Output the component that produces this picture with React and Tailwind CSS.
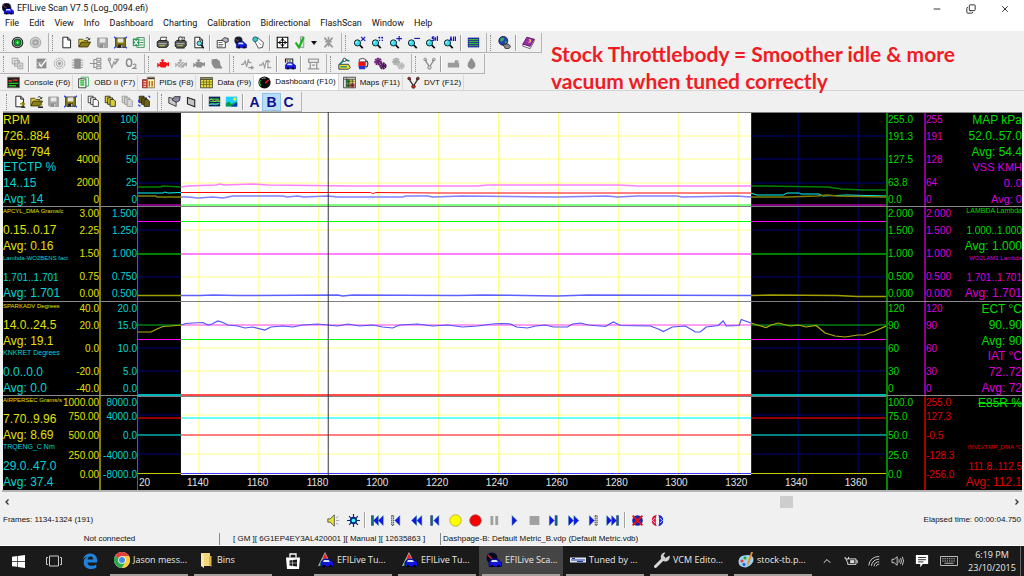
import React from "react";
import { ChevronUp, X, Minus, Copy } from "lucide-react";

const UI = "font-['Open_Sans','Noto_Sans',sans-serif]";
const ARIAL = "font-['Liberation_Sans',Arial,sans-serif]";

/* ---------- toolbar glyphs, drawn on a 16 unit grid ---------- */
const lens = (
  <>
    <path d="M8 11l4 4" stroke="#111" strokeWidth="2.2" />
    <circle cx="5.5" cy="8.5" r="3.8" fill="#35e0ee" stroke="#123" strokeWidth="1.2" />
    <path d="M3.6 8.5a2 2 0 0 1 1.6-1.9" stroke="#fff" fill="none" />
  </>
);
const car = (
  <g>
    <path d="M3 14.5V10l2.5-3h6L14 9.5l1.5 1v4z" fill="#1414e0" stroke="#00006a" strokeWidth=".8" />
    <path d="M6 8h4.5l1.5 2H5z" fill="#cfe6ff" />
    <circle cx="6" cy="14" r="1.3" fill="#000" />
    <circle cx="12.5" cy="14" r="1.3" fill="#000" />
  </g>
);
const page = <path d="M3.5 1.5h6L13 5v9.5H3.5z M9.5 1.5V5H13" fill="#fff" stroke="#222" strokeWidth="1.2" />;
const folder = (
  <>
    <path d="M1 13V4h5l1.5 1.5H12V8" fill="#d9c94a" stroke="#4a4200" />
    <path d="M1 13.5l3-6h11.5l-3.5 6z" fill="#8a7d18" stroke="#2e2a00" />
    <path d="M9.5 3c2-2 4-1 4.500 1.500m0 0l-2-.8m2 .8l1-1.800" stroke="#111" fill="none" />
  </>
);
const disk = (a, b) => (
  <>
    <path d="M2 2.500h12v11.500H3.500L2 12.500z" fill={a} stroke={b} />
    <path d="M4.500 3h7v5h-7z" fill="#e8e8e8" />
    <path d="M5 10.500h6V14H5z" fill={b} />
    <path d="M9 11.200h1.300V14H9z" fill="#eee" />
  </>
);
const printer = (
  <>
    <path d="M5 6l1-4.500h7L12 6z" fill="#fff" stroke="#222" />
    <path d="M1.500 7l2-1.500h10L15 7v5l-2 2H3l-1.500-1.500z" fill="#555" stroke="#111" />
    <path d="M3 9.500h10" stroke="#ddd" />
    <path d="M4 12h7" stroke="#e8e85a" />
  </>
);
const engine = (c) => (
  <path d="M6 3h4v1.500H9V6h3l1 1.500h1.500v-1H16v5h-1.500v-1H13L12 13H6l-1.500-2H3v1.500H1.500v-5H3V9h1.500V6H7V4.500H6z" fill={c} />
);
const gearPair = (c, d) => (
  <g fill="none">
    <circle cx="5" cy="5.500" r="3.200" stroke={c} strokeWidth="3" strokeDasharray="2.200 .5" />
    <circle cx="5" cy="5.500" r="2.200" fill={c} />
    <circle cx="11" cy="11" r="3" stroke={d} strokeWidth="3" strokeDasharray="2.200 .5" />
    <circle cx="11" cy="11" r="2" fill={d} />
  </g>
);
const multi = (c) => (
  <g stroke="#222" fill={c}>
    <path d="M1.500 1.500h6v8h-6z" />
    <path d="M4.500 3.500h6v8h-6z" />
    <path d="M7.500 5.500H12l2 2v6.500H7.500z" />
  </g>
);
const vials = (c, d) => (
  <g fill="none" stroke={c} strokeWidth="1.600">
    <path d="M2 3l4 6m8-6l-4 6M4 2v3m8-3v3M6 9l2 4 2-4" />
    <circle cx="2.500" cy="3" r="1.600" fill={d} stroke={c} strokeWidth="1" />
    <circle cx="13.500" cy="3" r="1.600" fill={d} stroke={c} strokeWidth="1" />
    <circle cx="8" cy="13" r="2.200" fill={d} stroke={c} strokeWidth="1" />
  </g>
);
const zoomMark = (d) => (
  <>
    {lens}
    <path d={d} stroke="#1a1ac0" strokeWidth="1.500" fill="none" />
  </>
);
const dkPage = (
  <>
    {page}
    <path d="M8.500 11h5m-2.500-2.500l3 2.500-3 2.500" stroke="#8a7a00" strokeWidth="1.600" fill="none" />
    <path d="M10 15h5" stroke="#111" strokeWidth="1.500" />
  </>
);
const bars = (
  <>
    <path d="M1 2h14v12H1z" fill="#10205a" />
    <path d="M2 5h12M2 8h12M2 11h12" stroke="#33c24a" strokeWidth="1.500" />
  </>
);

const ICONS = {
  link: (
    <>
      <circle cx="8" cy="8" r="6.500" fill="#bbb" stroke="#222" strokeWidth="1.300" />
      <circle cx="8" cy="8" r="4.300" fill="#0fa81a" stroke="#033" />
      <path d="M6.500 8h3M8 6.500v3" stroke="#9dff9d" />
    </>
  ),
  linkOff: (
    <>
      <circle cx="8" cy="8" r="6.500" fill="#cfcfcf" stroke="#999" />
      <circle cx="8" cy="8" r="4" fill="#a5a5a5" />
      <path d="M6.500 8h3M8 6.500v3" stroke="#ddd" />
    </>
  ),
  page,
  folder,
  disk: disk("#aaa", "#8c8c8c"),
  diskLog: (
    <>
      {disk("#8a7d10", "#222")}
      <path d="M0 1l2.500 2M16 1l-2.500 2M0 15l2.500-2M16 15l-2.500-2" stroke="#2a3cff" strokeWidth="1.600" />
    </>
  ),
  excel: (
    <>
      <path d="M6 2h9v12H6z" fill="#fff" stroke="#1c7a3c" />
      <path d="M9 5h5M9 8h5M9 11h5" stroke="#1c7a3c" />
      <path d="M1 3h8v9.500H1z" fill="#2f9a55" />
      <path d="M2.800 5l4.500 6m0-6l-4.500 6" stroke="#fff" strokeWidth="1.500" />
    </>
  ),
  printer,
  printer2: (
    <>
      {printer}
      <circle cx="8" cy="3.500" r="2.300" fill="#eee" stroke="#333" />
      <path d="M3 15h10" stroke="#333" />
    </>
  ),
  preview: (
    <>
      {page}
      <circle cx="9" cy="9" r="2.800" fill="#5fe3ee" stroke="#122" />
      <path d="M11 11l3.500 4" stroke="#111" strokeWidth="1.800" />
    </>
  ),
  props: (
    <>
      <path d="M1.500 5.500h10v9h-10z" fill="#fff" stroke="#222" />
      <path d="M3 8h5M3 10.500h6M3 12.500h5" stroke="#555" />
      <path d="M7 5l3-3 5 1v4l-3 1z" fill="#b5b5c8" stroke="#222" />
    </>
  ),
  scanCar: (
    <>
      <circle cx="5.500" cy="5.500" r="5" fill="#102030" />
      <path d="M2 4l4 3" stroke="#e33" />
      {car}
    </>
  ),
  tag: (
    <>
      <path d="M3 6l4-4 7 6-1 6-5 1z" fill="#fff" stroke="#333" />
      <circle cx="4" cy="4" r="3" fill="#39c7c7" stroke="#156" />
      <path d="M8 8l3 3" stroke="#888" />
    </>
  ),
  grid: (
    <>
      <path d="M1.500 1.500h13v13h-13z" fill="#fff" stroke="#111" strokeWidth="1.400" />
      <path d="M8 2v12M2 8h12" stroke="#111" strokeWidth="1.300" />
      <path d="M8 2.500l-2.500 3h5zM8 13.500l-2.500-3h5zM2.500 8l3-2.500v5zM13.500 8l-3-2.500v5z" fill="#111" />
    </>
  ),
  check: (
    <>
      <path d="M8 1h4v13H8z" fill="#ddd" stroke="#888" />
      <path d="M2 8l4 6L12 1.500" stroke="#12b51a" strokeWidth="2.600" fill="none" />
    </>
  ),
  checkOff: (
    <g stroke="#9a9a9a" strokeWidth="2" fill="none">
      <path d="M8 1v12M3 2l10 12M13 2L3 14M4 7h8" />
    </g>
  ),
  zx: zoomMark("M10 1l5 5m0-5l-5 5"),
  z1: zoomMark("M10.500 1v2m0 1.500v1.500M14 1v2m0 1.500V6M9 2h1M12.500 2h1"),
  zp: zoomMark("M12.500 0v6.500M9 3.300h7"),
  zm: zoomMark("M9 3h7"),
  zs: zoomMark("M9 1h2.500M9 1v2h2v2.500H8.500M13 1.500v4M15.300 0v6"),
  za: zoomMark("M8.500 6l1.300-4.500L11 6M13 .5V6M15.300 .5V6"),
  list: (
    <>
      <path d="M1 2h14v12H1z" fill="#2424a8" />
      <path d="M2 4.500h12M2 7h12M2 9.500h12M2 12h12" stroke="#37b537" strokeWidth="1.500" />
    </>
  ),
  web: (
    <>
      <circle cx="6.500" cy="6" r="5.500" fill="#2440b8" stroke="#113" />
      <path d="M3 3q3-2 5 0l-2 3-3 1zM8 7l3-1-1 4z" fill="#35b545" />
      <path d="M6 10h7l2.500 3-2 2.500H9z" fill="#888" stroke="#222" />
    </>
  ),
  book: (
    <>
      <path d="M6 1.500L15 4l-5 9-9-3z" fill="#a02ab0" stroke="#401048" />
      <path d="M1 10l9 3 5-9v2.500l-5 9-9-3z" fill="#fff" stroke="#401048" strokeWidth=".8" />
      <path d="M8.500 5q2-1 2 .7T8 8" stroke="#ffd84a" strokeWidth="1.400" fill="none" />
    </>
  ),
  copyOff: (
    <g stroke="#999" fill="#e4e4e4">
      <path d="M1.500 1.500h7v7h-7zM4.500 4.500h6v7h-6z" />
      <path d="M8.500 7.500h6v7h-6z" />
      <path d="M10 10h3M10 12h3" />
    </g>
  ),
  boxCheck: (
    <>
      <path d="M2 2h12v12H2z" fill="#8c8c8c" />
      <path d="M2 7h6M2 11h4" stroke="#ccc" />
      <path d="M5 8l2.500 3.500L14 3" stroke="#fff" strokeWidth="1.800" fill="none" />
    </>
  ),
  rings: (
    <g fill="none" stroke="#999">
      <circle cx="8" cy="8" r="6.500" strokeDasharray="3 1" />
      <circle cx="8" cy="8" r="4" />
      <circle cx="8" cy="8" r="1.500" fill="#999" />
    </g>
  ),
  chip: (
    <>
      <path d="M1 4h14M1 7h14M1 10h14M1 13h14" stroke="#aaa" strokeWidth="1.300" />
      <path d="M4 2h8v12.500H4z" fill="#8e8e8e" />
    </>
  ),
  tree: (
    <g stroke="#909090" fill="none" strokeWidth="1.300">
      <path d="M1 8h5M6 3v10h3M6 8h3M6 3h3" />
      <path d="M9.500 1.500h5v3h-5zM9.500 6.500h5v3h-5zM9.500 11.500h5v3h-5z" />
    </g>
  ),
  pins: (
    <g stroke="#999" fill="none" strokeWidth="1.500">
      <path d="M2 3l4 10 3-8M9 3h5l-4 6M14 2l-5 7" />
      <circle cx="3" cy="3" r="1.500" />
    </g>
  ),
  o2: (
    <g stroke="#8c8c8c" fill="none" strokeWidth="1.900">
      <ellipse cx="5" cy="7" rx="3.200" ry="4.500" />
      <path d="M10 9.500q3-2 3.500.5 0 1.500-3.500 4h4.500" strokeWidth="1.400" />
    </g>
  ),
  engRed: engine("#f01414"),
  engOff1: (
    <>
      {engine("#a8a8a8")}
      <path d="M3 12l10-8M6 13l8-7" stroke="#efefef" />
    </>
  ),
  engOff2: engine("#8f8f8f"),
  bell: <path d="M2 3l6-1 4 3 1 5 2 3v1H6L4 12l-2-4z" fill="#8c8c8c" />,
  waveR: <path d="M0 9h3l2-4 2 7 2-9 1 4h3M9 13h6l-2.500-2m2.500 2l-2.500 2" stroke="#999" strokeWidth="1.400" fill="none" />,
  waveU: <path d="M0 10h3l2-3 2 6 2-9M11 13V4m-2.500 2.500L11 4l2.500 2.500M10 13h5" stroke="#999" strokeWidth="1.400" fill="none" />,
  carGauge: (
    <>
      <path d="M3 7V2.500h9V7" fill="#ddd" stroke="#223" strokeWidth="1.300" />
      <path d="M4.500 4h2v2h-2z" fill="#f22" />
      <path d="M7.500 4h2v2h-2z" fill="#2b2" />
      {car}
    </>
  ),
  box: (
    <g stroke="#999" fill="none" strokeWidth="1.600">
      <path d="M2 2.500h12v4H2zM4 6.500v8h8v-8M6 10h4M1 14.500h14" />
    </g>
  ),
  pump: (
    <>
      <path d="M1 9h12l2 4-2 2H1z" fill="#e8e232" stroke="#223" />
      <path d="M2 9L8 3l6 2" stroke="#117a7a" strokeWidth="2" fill="none" />
      <circle cx="8" cy="3.500" r="2" fill="#fff" stroke="#122" />
      <path d="M3 12h8" stroke="#168a8a" strokeWidth="1.600" />
    </>
  ),
  can: (
    <>
      <path d="M4 3q4-2.500 8 0v3H4z" fill="#fff" stroke="#223" />
      <path d="M3 6h9v5H3z" fill="#e11" />
      <path d="M3 11h9l-1 4H4z" fill="#2335d5" />
      <path d="M12 5q3 0 2.500 4T12 12" stroke="#223" fill="none" strokeWidth="1.300" />
    </>
  ),
  gears: gearPair("#6a1a72", "#4c1054"),
  gearsOff: gearPair("#a8a8a8", "#b8b8b8"),
  vialsOff: vials("#8c8c8c", "#c8c8c8"),
  tank: <path d="M1 7h8l1-3h4v2h-2l3 1v6H1z" fill="#9a9a9a" />,
  drop: <path d="M8 1q6 7 4.500 10.500Q11 15 8 15t-4.500-3.500Q2 8 8 1z" fill="#8f8f8f" />,
  console: (
    <>
      <path d="M.5 1.500h15v13H.5z" fill="#1c1c1c" stroke="#777" />
      <path d="M2 5h4v2H2zM9 4h4v2H9z" fill="#e22" />
      <path d="M2 9h12M2 12h9M7 5h1.500" stroke="#1ec51e" strokeWidth="1.600" />
    </>
  ),
  obd: (
    <>
      <path d="M5 1.500h9v11H5z" fill="#fff" stroke="#2a5" />
      <path d="M2 3.500h9v11H2z" fill="#e6ffe6" stroke="#222" />
      <path d="M4 6h5M4 8.500h5M4 11h5" stroke="#19a82c" strokeWidth="1.400" />
    </>
  ),
  pids: (
    <>
      <path d="M.5 4.500h6v10h-6z" fill="#d5483b" stroke="#822" />
      <path d="M6.500 1.500h9v13h-9z" fill="#fff3b0" stroke="#764" />
      <path d="M7 3h8" stroke="#335" strokeWidth="1.800" />
      <path d="M9 6v7M12.500 6v7" stroke="#c0601a" strokeWidth="1.800" />
      <path d="M2 7h3M2 10h3M2 13h3" stroke="#fff" />
    </>
  ),
  data: (
    <>
      <path d="M.5 2h15v12.500H.5z" fill="#e8e03c" stroke="#333" />
      <path d="M.5 4h15" stroke="#555" strokeWidth="1.800" />
      <path d="M1 7.500h14M1 10.500h14M4.500 4v10M8 4v10M11.500 4v10" stroke="#6a661a" />
    </>
  ),
  gauge: (
    <>
      <circle cx="8" cy="8" r="7.500" fill="#0a0a0a" />
      <path d="M3.500 12A6 6 0 0 1 3 5" stroke="#2c4" strokeWidth="1.400" fill="none" />
      <path d="M9 9l4-4" stroke="#f22" strokeWidth="1.600" />
      <path d="M4.500 3.500a6 6 0 0 1 5-1" stroke="#ccc" fill="none" />
    </>
  ),
  maps: (
    <>
      <path d="M.5 1.500h15v13H.5z" fill="#ddd" stroke="#333" />
      <path d="M4 4h5v5H4z" fill="#1faa1f" />
      <path d="M9 4h5v5H9z" fill="#e8d82a" />
      <path d="M4 9h5v5H4z" fill="#1faa1f" />
      <path d="M9 9h5v5H9z" fill="#d22" />
      <path d="M4 2v12M1 4h14M6.500 4v10M11.500 4v10M4 6.500h10M4 11.500h10" stroke="#333" strokeWidth=".8" />
    </>
  ),
  dvt: vials("#333", "#e11414"),
  dPage: dkPage,
  dFolder: (
    <>
      {folder}
      <path d="M10 15h6" stroke="#111" strokeWidth="1.800" />
      <path d="M11 12h4" stroke="#8a7a00" strokeWidth="1.600" />
    </>
  ),
  dPages: multi("#fff"),
  dPagesY: multi("#d8cc3a"),
  dPagesG: <g opacity=".45">{multi("#bbb")}</g>,
  dPagesL: (
    <>
      {multi("#6e6410")}
      <path d="M0 12l3 2M13 1l2 2M1 6l-1 3" stroke="#2a3cff" strokeWidth="1.600" />
    </>
  ),
  panel: (
    <>
      <path d="M1 3l9 2v9l-9-4z" fill="#c9c9c9" stroke="#222" />
      <path d="M5 6l3-4h7l-1 5-4 2z" fill="#8c8ca8" stroke="#222" />
    </>
  ),
  panel2: <path d="M3 3l9 3v8.500L3 11z" fill="#c4c4c4" stroke="#222" strokeWidth="1.300" />,
  chart: (
    <>
      {bars}
      <path d="M1 7l3-2 4 3 3-2 4 2" stroke="#e8e832" fill="none" />
      <path d="M1 12l4-1 4 1 5-2" stroke="#5cf" fill="none" />
    </>
  ),
  photo: (
    <>
      <path d="M1 2h14v12H1z" fill="#1bd0ff" />
      <path d="M1 14V10l4-2 3 3 7-3v6z" fill="#0a9a4a" />
      <path d="M7 14l8-5v5z" fill="#1434c8" />
      <circle cx="12" cy="5" r="2" fill="#ffe814" />
    </>
  ),
};

function Icon({ name }) {
  return (
    <svg viewBox="0 0 16 16" className="size-[13px] shrink-0" aria-hidden="true">
      {ICONS[name]}
    </svg>
  );
}

/* ---------- toolbars ---------- */
function Grip() {
  return <span className="ml-[3px] mr-1 h-4 w-px shrink-0 border-l border-dotted border-[#8a8a8a]" />;
}
function Sep() {
  return <span className="mx-[2px] h-4 w-[2px] shrink-0 border-l border-[#a0a0a0] bg-white" />;
}
function Bar({ items, tight }) {
  return (
    <div className="flex h-5 items-center border-b border-r border-[#b4b4b4] pr-1">
      <Grip />
      {items.map((n, i) => {
        if (n === "|") return <Sep key={i} />;
        if (n === "v")
          return (
            <button key={i} aria-label="more" className="flex w-2.5 justify-center">
              <svg viewBox="0 0 6 4" className="h-1 w-1.5"><path d="M0 0h6L3 4z" fill="#111" /></svg>
            </button>
          );
        if (n.length === 1)
          return (
            <button
              key={i}
              className={`h-4 w-[17px] ${ARIAL} text-sm leading-4 font-bold text-[#10108c] ${n === "B" ? "bg-[#b9dcf7] outline outline-[#8cc4ee]" : ""}`}
            >
              {n}
            </button>
          );
        return (
          <button key={i} aria-label={n} className={`flex h-4 shrink-0 items-center justify-center ${tight ? "w-[17px]" : "w-[18px]"}`}>
            <Icon name={n} />
          </button>
        );
      })}
    </div>
  );
}

const ROW1 = [
  ["link", "linkOff"],
  ["page", "folder", "disk", "diskLog", "excel", "|", "printer", "printer2", "preview", "|", "props", "scanCar", "tag", "|", "grid", "check", "v", "checkOff"],
  ["zx", "z1", "zp", "zm", "zs", "za", "|", "list"],
  ["web", "|", "book"],
];
const ROW2 = [
  ["copyOff", "|", "boxCheck", "rings", "chip", "tree", "pins", "o2"],
  ["engRed", "engOff1", "engOff2", "bell"],
  ["waveR", "waveU", "|", "carGauge", "|", "box"],
  ["pump", "can", "gears", "gearsOff"],
  ["vialsOff", "|", "tank", "drop"],
];
const ROW3 = [
  ["dPage", "dFolder", "disk", "diskLog", "|", "dPages", "dPagesY", "dPagesG", "dPagesL"],
  ["panel", "panel2", "|", "chart", "photo", "|", "A", "B", "C"],
];
const TABS = [
  ["Console (F6)", "console"],
  ["OBD II (F7)", "obd"],
  ["PIDs (F8)", "pids"],
  ["Data (F9)", "data"],
  ["Dashboard (F10)", "gauge"],
  ["Maps (F11)", "maps"],
  ["DVT (F12)", "dvt"],
];
const MENU = ["File", "Edit", "View", "Info", "Dashboard", "Charting", "Calibration", "Bidirectional", "FlashScan", "Window", "Help"];

/* ---------- dashboard data ---------- */
const INK = {
  y: "text-[#e2e200]",
  c: "text-[#00d4d4]",
  g: "text-[#00dc00]",
  m: "text-[#dc00dc]",
  r: "text-[#e00000]",
};
const EDGE = {
  y: "border-[#808000]",
  c: "border-[#0080c0]",
  g: "border-[#008a00]",
  m: "border-[#8a008a]",
  r: "border-[#a00000]",
};
/* each group: colour, [name, size], [range, size], [average, size] */
const ROWS = [
  {
    left: [["y", ["RPM", 12], ["726..884", 12], ["Avg: 794", 12]], ["c", ["ETCTP %", 12], ["14..15", 12], ["Avg: 14", 12]]],
    ticks: [["8000", "6000", "4000", "2000", "0"], ["100", "75", "50", "25", "0"], ["255.0", "191.3", "127.5", "63.8", "0.0"], ["255", "191", "128", "64", "0"]],
    right: [["g", ["MAP kPa", 12], ["52.0..57.0", 12], ["Avg: 54.4", 12]], ["m", ["VSS KMH", 11], ["0..0", 11], ["Avg: 0", 11]]],
  },
  {
    left: [["y", ["APCYL_DMA Grams/c", 6], ["0.15..0.17", 12], ["Avg: 0.16", 12]], ["c", ["Lambda-WO2BENS fact", 6], ["1.701..1.701", 10], ["Avg: 1.701", 12]]],
    ticks: [["3.00", "2.25", "1.50", "0.75", "0.00"], ["1.500", "1.250", "1.000", "0.750", "0.500"], ["2.000", "1.500", "1.000", "0.500", "0.000"], ["2.000", "1.500", "1.000", "0.500", "0.000"]],
    right: [["g", ["LAMBDA Lambda", 7], ["1.000..1.000", 10], ["Avg: 1.000", 12]], ["m", ["WO2LAM1 Lambda", 6], ["1.701..1.701", 10], ["Avg: 1.701", 12]]],
  },
  {
    left: [["y", ["SPARKADV Degrees", 6], ["14.0..24.5", 12], ["Avg: 19.1", 12]], ["c", ["KNKRET Degrees", 7], ["0.0..0.0", 12], ["Avg: 0.0", 12]]],
    ticks: [["40.0", "20.0", "0.0", "-20.0", "-40.0"], ["20.0", "15.0", "10.0", "5.0", "0.0"], ["120", "90", "60", "30", "0"], ["120", "90", "60", "30", "0"]],
    right: [["g", ["ECT °C", 12], ["90..90", 12], ["Avg: 90", 12]], ["m", ["IAT °C", 12], ["72..72", 12], ["Avg: 72", 12]]],
  },
  {
    last: true,
    left: [["y", ["AIRPERSEC Grams/s", 6], ["7.70..9.96", 12], ["Avg: 8.69", 12]], ["c", ["TRQENG_C Nm", 7], ["29.0..47.0", 12], ["Avg: 37.4", 12]]],
    ticks: [["1000.00", "750.00", "500.00", "250.00", "0.00"], ["8000.0", "4000.0", "0.0", "-4000.0", "-8000.0"], ["100.0", "75.0", "50.0", "25.0", "0.0"], ["255.0", "127.3", "-0.5", "-128.3", "-256.0"]],
    right: [["g", ["E85R %", 12, "strike"], ["", 12], ["", 12]], ["r", ["INVLVTMP_DMA °C", 6], ["111.8..112.5", 10], ["Avg: 112.1", 12]]],
  },
];
const SIZE = {
  6: "text-[6px] leading-2",
  7: "text-[7px] leading-2",
  10: "text-[10px] leading-[15px]",
  11: "text-[11px] leading-[15px]",
  12: "text-xs leading-[15px]",
};

function Stats({ groups, right }) {
  return (
    <div className={`min-w-0 ${right ? "flex-1 text-right" : "w-[60px] text-left"}`}>
      {groups.map(([ink, ...lines], i) => (
        <div key={i} className={`flex h-[47px] flex-col gap-px whitespace-nowrap ${INK[ink]}`}>
          {lines.map(([t, s, strike], j) => (
            <p key={j} className={`h-[15px] ${SIZE[s]} ${strike ? "line-through" : ""}`}>{t}</p>
          ))}
        </div>
      ))}
    </div>
  );
}

function Ticks({ values, ink, side, last }) {
  return (
    <div
      className={`grid shrink-0 items-center text-[10px] leading-3 ${INK[ink]} ${EDGE[ink]} ${
        last ? "grid-rows-[14px_13px_26px_13px_26px]" : "grid-rows-[14px_20px_26px_20px_14px]"
      } ${side === "left" ? "w-[38px] justify-items-end border-r-2" : "w-[38px] justify-items-start border-l-2"}`}
    >
      {values.map((v, i) => <span key={i} className="whitespace-nowrap">{v}</span>)}
    </div>
  );
}

function SidePanel({ side }) {
  return (
    <div className={`grid shrink-0 grid-rows-[94px_95px_94px_95px] bg-black ${side === "left" ? "w-[135px]" : "w-[136px]"}`}>
      {ROWS.map((r, i) => (
        <div key={i} className="flex border-t border-[#8a8a8a]">
          {side === "left" ? (
            <>
              <Stats groups={r.left} />
              <Ticks values={r.ticks[0]} ink="y" side="left" last={r.last} />
              <div className="flex flex-1 justify-end"><Ticks values={r.ticks[1]} ink="c" side="left" last={r.last} /></div>
            </>
          ) : (
            <>
              <Ticks values={r.ticks[2]} ink="g" side="right" last={r.last} />
              <Ticks values={r.ticks[3]} ink={r.last ? "r" : "m"} side="right" last={r.last} />
              <Stats groups={r.right} right />
            </>
          )}
        </div>
      ))}
    </div>
  );
}

/* ---------- chart ---------- */
const V_LINES = [1, 61, 121, 181, 241, 301, 361, 421, 481, 541, 601, 661, 721];
const H_LINES = [24, 47, 71, 118, 142, 165, 213, 236, 259, 303, 342];
const SERIES = [
  ["#008000", 1.5, "0,75 23,75 24,74 43,75 50,74 78,73 82,72 86,73 115,72 130,73 213,74 340,74 350,73 480,73 500,74 620,74 690,75 704,77 725,78 749,78"],
  ["#00ffff", 1, "0,81 25,81 27,80 30,81 43,80.5 233,80.5 235,81.5 238,80.5 300,81 613,81 620,83 646,83 650,81 662,81 664,82 682,82 686,84 710,83 749,84"],
  ["#808000", 1.5, "0,84 18,84 19,85 50,85 60,86 75,85 85,86 95,84 145,84 149,85 160,84 166,85 190,84 200,85 265,85 268,84 290,84 295,85 325,84 420,85 470,84 480,85 500,84 540,84 545,85 600,84 613,85 650,85 680,84 690,83 700,84 749,85"],
  ["#800080", 2, "0,93 749,93"],
  ["#ff00ff", 1, "0,109.5 749,109.5"],
  ["#008000", 2, "0,142 749,142"],
  ["#a0a000", 1.5, "0,183.5 62,183.5 75,183 100,183.5 200,183 205,184 215,183 320,183.5 345,183 420,184 450,183 613,183.5 633,183 700,183.5 720,184.5 749,184.5"],
  ["#008000", 1.5, "0,213 749,213"],
  ["#ff00ff", 1, "0,227.5 749,227.5"],
  ["#b0b000", 1.2, "0,220 13,220 19,217 25,214.5 33,214 43,213 48,211.5 55,211 65,210.5 70,213 74,212 80,209 85,210.5 90,213 100,214 107,216 115,215 127,218 133,215 145,214 155,215 165,213 180,212 190,213 200,214 210,212 222,214 235,213 245,215 255,216 262,213 280,212 295,214 310,213 325,215 340,214 355,212 363,211.5 373,212 379,215 390,216 398,214 408,213 416,215 430,215 435,212 443,211 451,213 468,214.5 476,210 483,213.5 513,214 521,217 526,219.5 535,215 548,214 555,218 558,220 563,220 569,215 581,213.5 586,209 589,214 602,213.5 604,207.5 611,210 620,213 629,215.5 634,213 641,211 653,214 661,213 669,215 679,213.5 688,221 698,224 708,225 721,223 727,223 738,219 749,214"],
  ["#00b4b4", 2, "0,283 749,283"],
  ["#c80000", 1.5, "0,306 749,306"],
  ["#008080", 2, "0,323 749,323"],
  ["#c8c800", 1, "0,361.5 749,361.5"],
];
const FRAME_LABELS = [1140, 1160, 1180, 1200, 1220, 1240, 1260, 1280, 1300, 1320, 1340, 1360];

function Chart() {
  return (
    <div className="min-w-0 flex-1 overflow-hidden bg-black">
      <svg viewBox="0 0 749 363" preserveAspectRatio="none" className="isolate block h-[363px] w-full" role="img" aria-label="Logged data chart">
        <rect width="749" height="363" fill="#000" />
        <g stroke="#000080" strokeWidth="1">
          {V_LINES.map((x) => <path key={x} d={`M${x} 0V363`} />)}
          {H_LINES.map((y) => <path key={y} d={`M0 ${y}H749`} />)}
        </g>
        <path d="M0 .5H749M0 94.500H749M0 189.500H749M0 284.500H749" stroke="#808080" />
        {SERIES.map(([c, w, p], i) => <polyline key={i} points={p} fill="none" stroke={c} strokeWidth={w} />)}
        <rect x="43" width="571" height="363" fill="#fff" className="mix-blend-difference" />
        <path d="M190.500 0V363" stroke="#333" strokeWidth="1" />
      </svg>
      <div className="flex h-[15px] text-[10px] leading-[15px] text-[#e4e4e4]">
        <span className="w-[4%] shrink-0 pl-px">20</span>
        {FRAME_LABELS.map((n) => <span key={n} className="w-[8%] shrink-0 text-center">{n}</span>)}
      </div>
    </div>
  );
}

/* ---------- transport controls ---------- */
const tri = "#1414e6";
const fwd = (x) => <path key={"f" + x} d={`M${x} 2l6 6-6 6z`} fill={tri} stroke="#0a6a8a" strokeWidth=".6" />;
const back = (x) => <path key={"b" + x} d={`M${x} 2l-6 6 6 6z`} fill={tri} stroke="#0a6a8a" strokeWidth=".6" />;
const post = (x) => <path key={"p" + x} d={`M${x} 2h2.500v12h-2.500z`} fill="#10707a" stroke="#0a1a6a" strokeWidth=".6" />;
const dots = (x) => <path key={"d" + x} d={`M${x} 2h2.500v12h-2.500z`} fill="#ccc" stroke="#222" strokeDasharray="1.500 1" />;
const PLAYER = {
  First: [post(0.5), back(9), back(15)],
  "Previous marker": [dots(2), back(12)],
  Rewind: [back(8), back(14.5)],
  "Step back": [post(2), back(12)],
  Mark: <circle cx="8" cy="8" r="7" fill="#ffff00" stroke="#b0a820" />,
  Record: <circle cx="8" cy="8" r="7" fill="#f80000" stroke="#a04040" />,
  Pause: <path d="M3 2.500h3.500v11H3zM9 2.500h3.500v11H9z" fill="#a0a0a0" />,
  Play: fwd(5),
  Stop: <path d="M2 2.500h12v11H2z" fill="#a0a0a0" />,
  "Step forward": [fwd(3), post(10)],
  "Fast forward": [fwd(2), fwd(8.5)],
  "Next marker": [fwd(3), dots(10)],
  Last: [fwd(1), fwd(7), post(13)],
};
function PlayerButton({ label, children }) {
  return (
    <button aria-label={label} className="flex h-4 w-[18px] items-center justify-center">
      <svg viewBox="0 0 16 16" className="size-[13px]" aria-hidden="true">{children}</svg>
    </button>
  );
}

/* ---------- task bar ---------- */
const TASK_ICONS = {
  chrome: (
    <>
      <circle cx="8" cy="8" r="8" fill="#e2e2e2" />
      <path d="M8 8L1.070 4A8 8 0 0 1 14.930 4z" fill="#e0433a" />
      <path d="M1.070 4A8 8 0 0 0 8 16l3.500-6z" fill="#2da94f" />
      <path d="M14.930 4A8 8 0 0 1 8 16l3.460-6L8 4z" fill="#fccb2f" />
      <circle cx="8" cy="8" r="3.800" fill="#fff" />
      <circle cx="8" cy="8" r="3" fill="#4688f1" />
    </>
  ),
  folder: (
    <>
      <path d="M3 1h9v13H3z" fill="#f4d77c" />
      <path d="M11 4h2.500v11L11 13z" fill="#d9b44c" />
      <path d="M3 1l3 2v13l-3-2z" fill="#fbe8a6" />
    </>
  ),
  tune: (
    <>
      <path d="M7 0l7 14H0z" fill="#bbb" />
      <path d="M7 1.500l2.500 5h-5z" fill="#e22" />
      <path d="M4.300 7h5.400l1.300 3H3z" fill="#e8d820" />
      <path d="M2.800 10.500h4V14H1z" fill="#1fb52a" />
      {car}
    </>
  ),
  scan: (
    <>
      <circle cx="6" cy="6" r="6" fill="#070722" stroke="#445" />
      <path d="M2 3l6 6" stroke="#c33" strokeWidth="1.300" />
      {car}
    </>
  ),
  tuned: (
    <>
      <path d="M0 5.500h16v5H0z" fill="#dfe3f6" />
      <path d="M1 8h14M2 6.500h3M7 9.500h6" stroke="#223a9a" strokeWidth="1" />
    </>
  ),
  vcm: (
    <>
      <path d="M1.500 14.500l8-8" stroke="#d8d8d8" strokeWidth="3" strokeLinecap="round" />
      <path d="M15.500 3.500a4.500 4.500 0 1 1-4-3l-2 3 2 2.500z" fill="#cfcfcf" />
    </>
  ),
  paint: (
    <>
      <path d="M9 3q7 0 6.500 5T8 15.500Q0 15 .5 9T9 3z" fill="#9fd0ee" />
      <circle cx="4" cy="9" r="1.500" fill="#e33" />
      <circle cx="7" cy="6" r="1.500" fill="#2a2" />
      <circle cx="6" cy="12.500" r="1.500" fill="#25c" />
      <circle cx="11.500" cy="6.500" r="1.300" fill="#fc3" />
      <path d="M15 0l-4 12-2 2 .5-3L13 0z" fill="#e0903a" />
    </>
  ),
};
const TASKS = [
  ["Jason mess...", "chrome"],
  ["Bins", "folder"],
  null,
  ["EFILive Tu...", "tune"],
  ["EFILive Tu...", "tune"],
  ["EFILive Sca...", "scan", true],
  ["Tuned by ...", "tuned"],
  ["VCM Edito...", "vcm"],
  ["stock-tb.p...", "paint"],
];

function TaskBar() {
  return (
    <footer className="flex h-[30px] items-stretch bg-[#1a1a1a] text-[9px] text-[#e8e8e8]">
      <button aria-label="Start" className="flex w-9 items-center justify-center">
        <svg viewBox="0 0 16 16" className="size-[13px]" fill="#fff"><path d="M0 2.200l6.500-.9v6.200H0zM7.300 1.200L16 0v7.500H7.300zM0 8.300h6.500v6.300L0 13.700zM7.300 8.300H16V16l-8.700-1.200z" /></svg>
      </button>
      <button aria-label="Task view" className="flex w-9 items-center justify-center">
        <svg viewBox="0 0 16 12" className="h-3 w-4" fill="none" stroke="#ccc"><path d="M3.500 1h9v10h-9zM2 2.500H.5v7H2M14 2.500h1.500v7H14" /></svg>
      </button>
      <button aria-label="Edge" className="flex w-[35px] items-center justify-center">
        <svg viewBox="0 0 16 16" className="size-4" fill="#1f83dc"><path d="M.8 7.200C1.500 3 4.500.5 8.300.5c4.200 0 6.900 3 6.900 7.200v1.700H5.500c.2 2.500 2 3.400 4.300 3.400 1.700 0 3.200-.5 4.500-1.300v3.300c-1.500.8-3.200 1.200-5.200 1.200-4.600 0-7.400-2.600-7.400-6.500 0-2.700 1.400-4.800 3.700-6C3.200 4 1.800 5.200.8 7.200zM5.600 6.500h5.600c0-1.900-.9-3-2.700-3-1.600 0-2.700 1.200-2.900 3z" /></svg>
      </button>
      {TASKS.map((t, i) =>
        t ? (
          <button key={i} className={`flex w-[84px] flex-col px-[3px] ${t[2] ? "bg-[#454545]" : ""}`}>
            <span className="flex w-full flex-1 items-center gap-[3px] pl-1 whitespace-nowrap">
              <svg viewBox="0 0 16 16" className="size-4 shrink-0">{TASK_ICONS[t[1]]}</svg>
              {t[0]}
            </span>
            <span className="h-[2px] w-full bg-[#a8a09c]" />
          </button>
        ) : (
          <button key={i} aria-label="Store" className="flex w-9 items-center justify-center">
            <svg viewBox="0 0 16 16" className="size-4"><path d="M1 4.500h14L14 16H2z" fill="#fff" /><path d="M5 4.500V1h6v3.500" stroke="#fff" fill="none" strokeWidth="1.300" /><path d="M4.500 7.500l3-.4v2.700h-3zM8 7l4-.5v3.300H8zM4.500 10.300h3V13l-3-.4zM8 10.300h4v3.300L8 13z" fill="#1a1a1a" /></svg>
          </button>
        )
      )}
      <div className="flex flex-1 items-center justify-between pl-1.5">
        <button aria-label="Show hidden icons"><ChevronUp className="size-3" /></button>
        <svg viewBox="0 0 16 12" className="h-2.5 w-3.5" fill="none" stroke="#ddd" aria-label="Battery"><path d="M5 3.500h9v6.500H4V7M14.500 5.500h1v3M1 1v2.500h4V1M3 3.500V7" strokeWidth="1.200" /><path d="M7 5h5v3.500H7z" fill="#ddd" stroke="none" /></svg>
        <svg viewBox="0 0 16 16" className="size-3" fill="none" stroke="#ccc" strokeWidth="1.300" aria-label="Network"><path d="M1 14A13 13 0 0 1 15 2M4.500 14.500A10 10 0 0 1 15 5.500M8 15a7 7 0 0 1 7-6M11 15a4 4 0 0 1 4-3" /></svg>
        <svg viewBox="0 0 16 14" className="h-3 w-3.5" fill="none" stroke="#ddd" aria-label="Volume"><path d="M1 5h2.500L7 2v10L3.500 9H1zM9 5q1 2 0 4M11 3.500q2 3.500 0 7M13 2q3 5 0 10" /></svg>
        <svg viewBox="0 0 16 16" className="size-3.5" aria-label="Notifications"><path d="M1 1h14v10.500H9L6 15v-3.500H1z" fill="#fff" /><path d="M3.500 4h9M3.500 6.500h9M3.500 9h6" stroke="#1a1a1a" /></svg>
        <svg viewBox="0 0 20 12" className="h-3 w-[18px]" fill="none" stroke="#ccc" aria-label="Keyboard"><path d="M.5 1h19v10H.5z" /><path d="M2.500 3.500h15M2.500 6h15" strokeDasharray="1.500 1" /><path d="M5 8.500h10" /></svg>
        <div className="flex h-full items-center gap-1 pr-[3px]">
          <time className="w-12 text-center leading-[13px] whitespace-nowrap">6:19 PM<br />23/10/2015</time>
          <span className="h-full w-px bg-[#666]" />
        </div>
      </div>
    </footer>
  );
}

export default function App() {
  return (
    <div className={`w-full overflow-hidden bg-[#f0f0f0] text-[#111] ${UI}`}>
      <header className="bg-white font-['Roboto','Open_Sans',sans-serif] text-[9px]">
        <div className="flex h-[17px] items-center gap-[3px] pl-0.5">
          <svg viewBox="0 0 16 16" className="size-3">{TASK_ICONS.scan}</svg>
          <h1 className="flex-1">EFILive Scan V7.5 (Log_0094.efi)</h1>
          <div className="flex gap-6 pr-3.5">
            <button aria-label="Minimize"><Minus className="size-2.5" /></button>
            <button aria-label="Restore"><Copy className="size-2.5 -scale-x-100 rotate-180" /></button>
            <button aria-label="Close"><X className="size-2.5" /></button>
          </div>
        </div>
        <nav className="flex h-[14px] items-center gap-2.5 pl-[5px]">
          {MENU.map((m) => <button key={m}>{m}</button>)}
        </nav>
      </header>

      <main className="relative pt-px">
        <div className="flex pt-px">{ROW1.map((b, i) => <Bar key={i} items={b} />)}</div>
        <div className="flex pt-px">{ROW2.map((b, i) => <Bar key={i} items={b} />)}</div>
        <p className="absolute top-[9px] left-[551px] font-['Lato','Open_Sans',sans-serif] text-[21px] leading-[27px] font-bold whitespace-nowrap text-[#f01c24]">
          Stock Throttlebody = Smoother idle &amp; more
          <br />
          vacuum when tuned correctly
        </p>

        <div role="tablist" className={`flex h-[17px] items-end border-b border-[#d4d4d4] pl-[3px] ${ARIAL} text-[8px]`}>
          {TABS.map(([t, ic], i) => (
            <button
              key={t}
              role="tab"
              aria-selected={i === 4}
              className={`flex items-center gap-1 border-r border-[#dadada] pr-[2px] pl-1 ${i === 4 ? "h-4 bg-white" : "h-[15px]"}`}
            >
              <Icon name={ic} />
              {t}
            </button>
          ))}
        </div>

        <div className="flex pt-px pl-[3px]">{ROW3.map((b, i) => <Bar key={i} items={b} tight />)}</div>

        <section className={`mx-[2px] flex border-b-2 border-[#b4b4b4] pl-px ${ARIAL}`}>
          <SidePanel side="left" />
          <Chart />
          <SidePanel side="right" />
        </section>

        <div className="mt-[3px] flex h-[13px] items-center justify-between px-1 text-[#333]">
          <button aria-label="Scroll left"><svg viewBox="0 0 6 8" className="h-2 w-1.5" fill="none" stroke="currentColor" strokeWidth="1.300"><path d="M4.500 1.500L2 4l2.500 2.500" /></svg></button>
          <input
            type="range"
            aria-label="Log position"
            min="0"
            max="1000"
            defaultValue="777"
            className="h-3 flex-1 appearance-none bg-transparent [&::-webkit-slider-thumb]:h-3 [&::-webkit-slider-thumb]:w-[13px] [&::-webkit-slider-thumb]:appearance-none [&::-webkit-slider-thumb]:bg-[#cdcdcd]"
          />
          <button aria-label="Scroll right"><svg viewBox="0 0 6 8" className="h-2 w-1.5" fill="none" stroke="currentColor" strokeWidth="1.300"><path d="M1.500 1.500L4 4 1.500 6.500" /></svg></button>
        </div>

        <div className={`flex h-6 items-center pr-[3px] pl-[3px] ${ARIAL} text-[8px]`}>
          <span className="w-[321px]">Frames: 1134-1324 (191)</span>
          <div className="flex items-center gap-[2px]">
            <PlayerButton label="Sound">
              <path d="M1 6h3l5-5v14l-5-5H1z" fill="#e8e03a" stroke="#444" />
              <path d="M11 5l3-2M11 8h4M11 11l3 2" stroke="#999" />
            </PlayerButton>
            <PlayerButton label="Options">
              <path d="M8 0v16M0 8h16M2.500 2.500l11 11M13.500 2.500l-11 11" stroke="#0a2a6a" strokeWidth="1.400" />
              <circle cx="8" cy="8" r="4.500" fill="#0a2a8a" />
              <circle cx="8" cy="8" r="2.300" fill="#4ff" />
            </PlayerButton>
          </div>
          <Sep />
          <div className="flex w-[254px] justify-between">
            {Object.entries(PLAYER).map(([k, v]) => <PlayerButton key={k} label={k}>{v}</PlayerButton>)}
          </div>
          <Sep />
          <div className="flex gap-[2px]">
            <PlayerButton label="Clear marks">
              <circle cx="8" cy="8" r="6.500" fill="#1428b4" />
              <path d="M2 2l12 12M14 2L2 14" stroke="#e81414" strokeWidth="2.400" />
            </PlayerButton>
            <PlayerButton label="Loop">
              <path d="M7 1Q1 2 1 8t6 7l-1-3V4z" fill="#e01440" />
              <path d="M9 1q6 1 6 7t-6 7l1-3V4z" fill="#1428d4" />
              <path d="M5 5L2 8l3 3M11 5l3 3-3 3" stroke="#fff" fill="none" />
            </PlayerButton>
          </div>
          <span className="flex-1 text-right whitespace-nowrap">Elapsed time: 00:00:04.750</span>
        </div>

        <div className={`flex h-[14px] items-center border-b border-white ${ARIAL} text-[8px] whitespace-nowrap`}>
          <span className="w-[220px] border-r border-[#888] text-center leading-3">Not connected</span>
          <span className="w-[221px] border-r border-[#888] pl-[13px] leading-3">[ GM ][ 6G1EP4EY3AL420001 ][ Manual ][ 12635863 ]</span>
          <span className="pl-[2px] leading-3">Dashpage-B: Default Metric_B.vdp (Default Metric.vdb)</span>
        </div>
      </main>
      <TaskBar />
    </div>
  );
}
